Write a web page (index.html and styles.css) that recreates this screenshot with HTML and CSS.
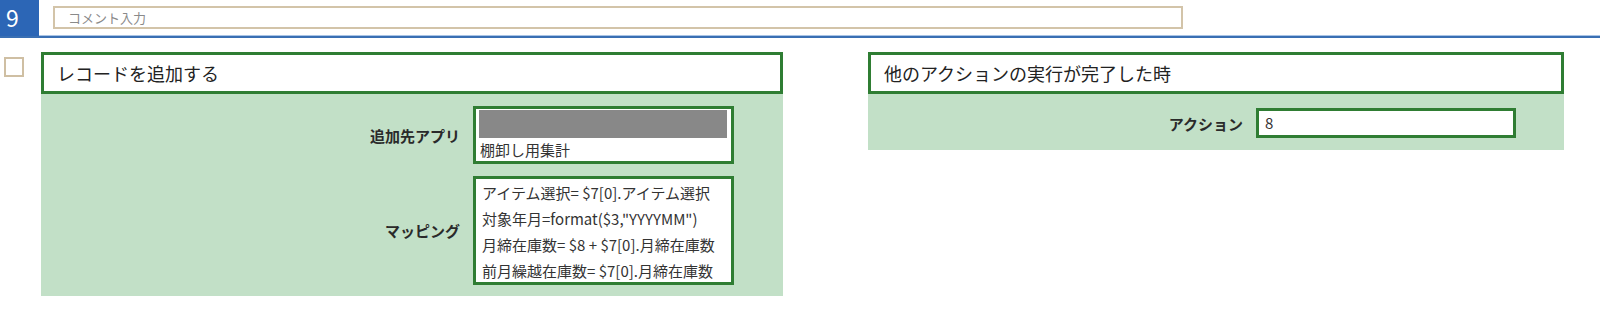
FILE: index.html
```html
<!DOCTYPE html>
<html>
<head>
    <meta charset="utf-8">
    <title>ステップ 9</title>
    <link rel="stylesheet" href="styles.css">
</head>
<body>
    <div class="step-head">
        <div class="step-no">9</div>
        <input class="comment" type="text" placeholder="コメント入力">
    </div>

    <div class="step-body">
        <span class="check"></span>

        <div class="card card-left">
            <div class="card-title">レコードを追加する</div>
            <div class="card-form">
                <label class="field-label">追加先アプリ</label>
                <div class="field-box app-box">
                    <div class="masked"></div>
                    <div class="app-name">棚卸し用集計</div>
                </div>

                <label class="field-label">マッピング</label>
                <div class="field-box map-box">
                    <div>アイテム選択= $7[0].アイテム選択</div>
                    <div>対象年月=format($3,"YYYYMM")</div>
                    <div>月締在庫数= $8 + $7[0].月締在庫数</div>
                    <div>前月繰越在庫数= $7[0].月締在庫数</div>
                </div>
            </div>
        </div>

        <div class="card card-right">
            <div class="card-title">他のアクションの実行が完了した時</div>
            <div class="card-form">
                <label class="field-label">アクション</label>
                <div class="field-box action-box">8</div>
            </div>
        </div>
    </div>
</body>
</html>
```

FILE: styles.css
```css
body {
    margin: 0;
    font-family: "Noto Sans CJK JP", "Noto Sans", sans-serif;
    color: #333;
    background: #fff;
}

/* step header */
.step-head {
    display: flex;
    align-items: flex-start;
    height: 36px;
    border-bottom: 2px solid #3a6fb3;
    box-shadow: 0 -1px 0 #a9c4e6 inset;
}
.step-no {
    width: 39px;
    height: 36px;
    background-color: #2c66b6;
    color: #fff;
    font-size: 23px;
    line-height: 35px;
    padding-left: 6px;
    box-sizing: border-box;
}
.comment {
    margin: 6px 0 0 14px;
    width: 1130px;
    height: 23px;
    box-sizing: border-box;
    border: 2px solid #d3c4a9;
    padding: 0 13px;
    font-family: inherit;
    font-size: 13px;
    color: #333;
    outline: none;
}
.comment::placeholder { color: #8a8a8a; }

/* step content */
.step-body {
    display: flex;
    align-items: flex-start;
    padding: 14px 0 0 4px;
}
.check {
    width: 20px;
    height: 20px;
    box-sizing: border-box;
    border: 2px solid #cfbfa3;
    margin: 5px 17px 0 0;
    flex-shrink: 0;
}
.card { background-color: #c2e0c7; }
.card-left { width: 742px; }
.card-right { width: 696px; margin-left: 85px; }

.card-title {
    height: 42px;
    box-sizing: border-box;
    border: 3px solid #2f7d33;
    background: #fff;
    font-size: 18px;
    line-height: 36px;
    padding-left: 13px;
    color: #222;
}

.card-form {
    display: grid;
    column-gap: 13px;
    row-gap: 12px;
    align-items: center;
}
.card-left .card-form {
    grid-template-columns: 419px 261px;
    padding: 12px 0 11px;
}
.card-right .card-form {
    grid-template-columns: 375px 260px;
    padding: 14px 0 12px;
}

.field-label {
    text-align: right;
    font-size: 15px;
    font-weight: bold;
    color: #2a2a2a;
}
.field-box {
    border: 3px solid #2f7d33;
    background: #fff;
    box-sizing: border-box;
    font-size: 15px;
}

.app-box { height: 58px; padding: 1px 4px 0 3px; }
.masked { height: 28px; background-color: #888; }
.app-name { padding-left: 1px; line-height: 23px; }

.map-box { padding: 1px 4px 0 6px; line-height: 26px; height: 109px; }
.map-box div { white-space: nowrap; }

.action-box { height: 30px; line-height: 24px; padding-left: 6px; }
```
